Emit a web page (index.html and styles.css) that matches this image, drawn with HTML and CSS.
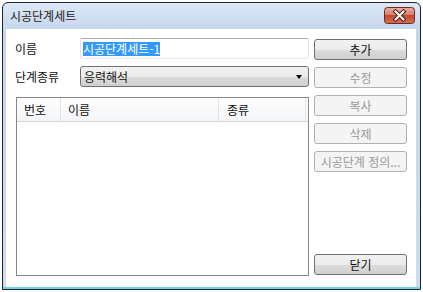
FILE: index.html
```html
<!DOCTYPE html>
<html lang="ko">
<head>
    <meta charset="UTF-8">
    <title>시공단계세트</title>
    <link rel="stylesheet" href="styles.css">
</head>
<body>

<div class="window">
    <div class="titlebar">
        <span class="title">시공단계세트</span>
        <svg class="close" width="31" height="17" viewBox="0 0 31 17">
            <defs>
                <linearGradient id="cg" x1="0" y1="0" x2="0" y2="1">
                    <stop offset="0" stop-color="#eab0a4"/>
                    <stop offset="0.45" stop-color="#d9806e"/>
                    <stop offset="0.5" stop-color="#c5482f"/>
                    <stop offset="1" stop-color="#d57256"/>
                </linearGradient>
            </defs>
            <rect x="0.5" y="0.5" width="30" height="16" rx="3" fill="url(#cg)" stroke="#6b2a21"/>
            <path d="M11.5 4.5 L19.5 12.5 M19.5 4.5 L11.5 12.5" stroke="#4a1c14" stroke-width="4" stroke-linecap="square"/>
            <path d="M11.5 4.5 L19.5 12.5 M19.5 4.5 L11.5 12.5" stroke="#fff" stroke-width="2" stroke-linecap="square"/>
        </svg>
    </div>

    <div class="client">
        <div class="left">
            <div class="row">
                <span class="label">이름</span>
                <div class="textbox"><span class="sel">시공단계세트-1</span></div>
            </div>
            <div class="row">
                <span class="label">단계종류</span>
                <div class="combo">
                    <span>응력해석</span>
                    <span class="arrow"></span>
                </div>
            </div>

            <div class="list">
                <div class="header">
                    <div class="col col-no">번호</div>
                    <div class="col col-name">이름</div>
                    <div class="col col-type">종류</div>
                </div>
            </div>
        </div>

        <div class="buttons">
            <button class="btn">추가</button>
            <button class="btn disabled">수정</button>
            <button class="btn disabled">복사</button>
            <button class="btn disabled">삭제</button>
            <button class="btn disabled">시공단계 정의...</button>
            <button class="btn btn-close">닫기</button>
        </div>
    </div>
</div>

</body>
</html>
```

FILE: styles.css
```css
body {
    margin: 0;
    background: #fff;
    font-family: "Noto Sans CJK KR", "Noto Sans", sans-serif;
    font-size: 12px;
    color: #111;
}
.window {
    margin: 2px 0 0 2px;
    width: 417px;
    height: 286px;
    border: 1px solid #1c2733;
    border-radius: 6px 6px 0 0;
    background: linear-gradient(#dde8f5, #c6d7ec 26px, #cddcef);
    box-shadow: inset 0 -2px 0 #6fcfec;
    display: flex;
    flex-direction: column;
}
.titlebar {
    height: 26px;
    display: flex;
    justify-content: space-between;
    align-items: flex-start;
    padding: 0 5px 0 7px;
}
.title {
    line-height: 26px;
    color: #1a1a1a;
}
.close {
    margin-top: 4px;
}
.client {
    flex: 1;
    margin: 0 4px 2px 3px;
    background: #fff;
    display: flex;
    gap: 5px;
    padding: 9px 9px 11px 9px;
}
.left {
    width: 294px;
    display: flex;
    flex-direction: column;
}
.row {
    display: flex;
    align-items: center;
    height: 21px;
}
.row + .row {
    margin-top: 7px;
}
.label {
    width: 65px;
    line-height: 21px;
}
.textbox {
    width: 229px;
    height: 21px;
    box-sizing: border-box;
    border: 1px solid;
    border-color: #abadb3 #dbdfe6 #e3e9ef #e2e3ea;
    border-radius: 2px;
    padding-left: 2px;
    display: flex;
    align-items: center;
}
.sel {
    background: #3399ff;
    color: #fff;
    line-height: 14px;
}
.combo {
    width: 229px;
    height: 21px;
    box-sizing: border-box;
    border: 1px solid #707070;
    border-radius: 3px;
    background: linear-gradient(#f2f2f2, #ebebeb 50%, #dddddd 50%, #cfcfcf);
    padding-left: 3px;
    display: flex;
    align-items: center;
}
.arrow {
    margin-left: auto;
    margin-right: 6px;
    border-top: 4px solid #000;
    border-left: 3.5px solid transparent;
    border-right: 3.5px solid transparent;
}
.list {
    margin-top: 10px;
    margin-left: 1px;
    width: 293px;
    height: 179px;
    box-sizing: border-box;
    border: 1px solid #828790;
}
.header {
    height: 24px;
    box-sizing: border-box;
    display: flex;
    background: linear-gradient(#fff, #f3f4f6);
    border-bottom: 1px solid #d5d5d5;
}
.col {
    box-sizing: border-box;
    padding-left: 7px;
    line-height: 23px;
    border-right: 1px solid #e3e4e6;
}
.col-no {
    width: 44px;
}
.col-name {
    width: 158px;
}
.col-type {
    width: 87px;
    padding-left: 8px;
}
.buttons {
    width: 93px;
    display: flex;
    flex-direction: column;
    gap: 7px;
    padding: 1px 0;
}
.btn {
    height: 21px;
    box-sizing: border-box;
    padding: 0;
    border: 1px solid #707070;
    border-radius: 3px;
    background: linear-gradient(#f2f2f2, #ebebeb 50%, #dddddd 50%, #cfcfcf);
    font: inherit;
    color: #111;
    line-height: 19px;
    text-align: center;
    white-space: nowrap;
}
.btn.disabled {
    border-color: #adb2b5;
    background: #f4f4f4;
    color: #9a9a9a;
}
.btn-close {
    margin-top: auto;
}
```
